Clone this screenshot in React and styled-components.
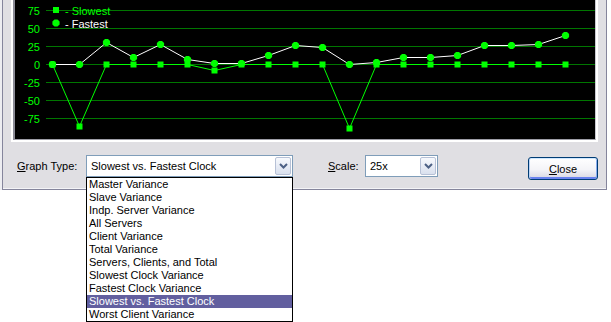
import React from 'react'
import styled, { createGlobalStyle } from 'styled-components'

const GlobalStyle = createGlobalStyle`
  html, body { margin: 0; padding: 0; background: #fff; }
  body {
    min-height: 322px;
    font-family: "Liberation Sans", Arial, sans-serif;
    font-size: 11px;
    color: #000;
  }
  #root { min-height: 322px; overflow: visible; }
`

// values on a +/-100 scale, one per sample
const fastest = [0, 0, 30, 10, 28, 7, 1, 2, 13, 26, 23, 0, 3, 10, 10, 13, 27, 26, 28, 40]
const slowest = [0, -86, 0, 0, 0, 0, -9, 0, 0, 0, 0, -89, 0, 0, 0, 0, 0, 0, 0, 0]
const gridValues = [75, 50, 25, 0, -25, -50, -75]

const graphTypes = [
  'Master Variance',
  'Slave Variance',
  'Indp. Server Variance',
  'All Servers',
  'Client Variance',
  'Total Variance',
  'Servers, Clients, and Total',
  'Slowest Clock Variance',
  'Fastest Clock Variance',
  'Slowest vs. Fastest Clock',
  'Worst Client Variance',
]
const selectedType = 'Slowest vs. Fastest Clock'

const px = i => 52 + 27 * i + 0.5
const py = v => Math.round(64 - (v * 18) / 25) + 0.5
const points = vals => vals.map((v, i) => `${px(i)},${py(v)}`).join(' ')

function Octagon({ x, y, r = 3.6 }) {
  const k = r * 0.42
  const pts = [
    [-k, -r], [k, -r], [r, -k], [r, k], [k, r], [-k, r], [-r, k], [-r, -k],
  ].map(([a, b]) => `${x + a},${y + b}`).join(' ')
  return <polygon points={pts} fill="#00ff00" />
}

function Square({ x, y }) {
  return <rect x={x - 3} y={y - 3} width={6} height={6} fill="#00ff00" />
}

function VarianceChart() {
  return (
    <ChartSvg width="580" height="139" viewBox="15 0 580 139">
      <g shapeRendering="crispEdges">
        {gridValues.map(v => (
          <line key={v} x1="46" x2="595" y1={py(v)} y2={py(v)} stroke="#007600" />
        ))}
      </g>
      {gridValues.map(v => (
        <AxisText key={v} x="40" y={py(v) + 4.5} textAnchor="end">{v}</AxisText>
      ))}

      <Square x={56} y={10} />
      <AxisText x="65" y="15">- Slowest</AxisText>
      <Octagon x={56} y={23} />
      <AxisText x="65" y="28" fill="#ffffff">- Fastest</AxisText>

      <polyline points={points(slowest)} fill="none" stroke="#00ff00" strokeWidth="1" />
      <polyline points={points(fastest)} fill="none" stroke="#ffffff" strokeWidth="1" />
      {slowest.map((v, i) => <Square key={i} x={px(i)} y={py(v)} />)}
      {fastest.map((v, i) => <Octagon key={i} x={px(i)} y={py(v)} />)}
    </ChartSvg>
  )
}

function Chevron() {
  return (
    <svg width="9" height="6" viewBox="0 0 9 6">
      <path d="M1 1 L4.5 4.5 L8 1" fill="none" stroke="#4d6185" strokeWidth="2" />
    </svg>
  )
}

function ComboBox({ width, value, items }) {
  return (
    <Combo $width={width}>
      <ComboText>{value}</ComboText>
      <ComboButton><Chevron /></ComboButton>
      {items && (
        <DropList>
          {items.map(item => (
            <DropItem key={item} $selected={item === value}>{item}</DropItem>
          ))}
        </DropList>
      )}
    </Combo>
  )
}

export default function App() {
  return (
    <>
      <GlobalStyle />
      <Screen>
        <Window>
          <ChartFrame>
            <ChartInner>
              <VarianceChart />
            </ChartInner>
          </ChartFrame>
          <ControlsRow>
            <FieldLabel $width={69}><u>G</u>raph Type:</FieldLabel>
            <ComboBox width={207} value={selectedType} items={graphTypes} />
            <FieldLabel $width={37} $gap={35}><u>S</u>cale:</FieldLabel>
            <ComboBox width={73} value="25x" />
            <CloseButton><u>C</u>lose</CloseButton>
          </ControlsRow>
        </Window>
      </Screen>
    </>
  )
}

const Screen = styled.div`
  width: 607px;
  height: 190px;
  padding-left: 2px;
  box-sizing: border-box;
  background: #ededf1;
`

const Window = styled.div`
  position: relative;
  width: 605px;
  height: 190px;
  box-sizing: border-box;
  background: #e0dfe3;
  border: 1px solid #85859c;
  border-top: none;
  box-shadow: inset 0 -1px 0 #f4f4f7;
  padding: 0 8px;
  display: flex;
  flex-direction: column;
`

const ChartFrame = styled.div`
  border: 2px solid #ffffff;
  border-top: none;
`

const ChartInner = styled.div`
  background: #000;
  border-left: 2px solid #8b8b96;
  border-right: 1px solid #c9c9d0;
  border-bottom: 1px solid #9d9da6;
  line-height: 0;
`

const ChartSvg = styled.svg`
  display: block;
`

const AxisText = styled.text`
  font-family: "Liberation Sans", Arial, sans-serif;
  font-size: 11px;
  fill: ${({ fill }) => fill || '#00ff00'};
`

const ControlsRow = styled.div`
  display: flex;
  align-items: flex-start;
  margin-top: 13px;
  padding-left: 6px;
`

const FieldLabel = styled.div`
  width: ${({ $width }) => $width}px;
  margin-left: ${({ $gap }) => $gap || 0}px;
  line-height: 22px;
  white-space: nowrap;
`

const Combo = styled.div`
  position: relative;
  display: flex;
  width: ${({ $width }) => $width}px;
  height: 22px;
  box-sizing: border-box;
  border: 1px solid #7f9db9;
  background: #fff;
  padding: 1px;
`

const ComboText = styled.div`
  flex: 1;
  padding-left: 3px;
  line-height: 18px;
  white-space: nowrap;
  overflow: hidden;
`

const ComboButton = styled.div`
  width: 16px;
  height: 18px;
  box-sizing: border-box;
  border: 1px solid #b7c1d6;
  border-radius: 2px;
  background: linear-gradient(#f7f9fd, #d9e0ee);
  display: flex;
  align-items: center;
  justify-content: center;
`

const DropList = styled.ul`
  position: absolute;
  top: calc(100% + 1px);
  left: -1px;
  right: -1px;
  margin: 0;
  padding: 0;
  list-style: none;
  background: #fff;
  border: 1px solid #000;
  z-index: 10;
`

const DropItem = styled.li`
  height: 13px;
  line-height: 13px;
  padding-left: 2px;
  white-space: nowrap;
  background: ${({ $selected }) => ($selected ? '#625f9f' : 'transparent')};
  color: ${({ $selected }) => ($selected ? '#fff' : '#000')};
`

const CloseButton = styled.button`
  margin: 2px 0 0 auto;
  width: 70px;
  height: 23px;
  padding: 0;
  font: inherit;
  color: #000;
  border: 1px solid #003c74;
  border-radius: 3px;
  background: linear-gradient(#ffffff, #f4f4f8 55%, #d6d6e2);
  box-shadow: inset 0 1px 0 #cee7ff, inset 1px 0 0 #bcd4f6, inset -1px 0 0 #89adf0,
    inset 0 -2px 0 #6982ee;
`
